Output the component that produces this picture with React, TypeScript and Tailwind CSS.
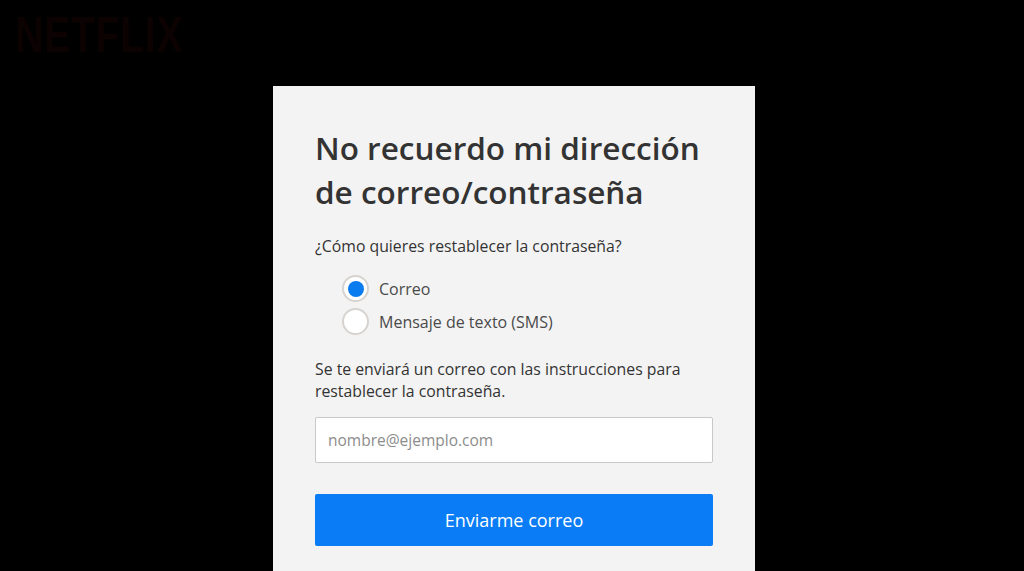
import React, { useState } from 'react';

const font = { fontFamily: '"Open Sans", "Noto Sans", sans-serif' };

const Radio: React.FC<{ checked: boolean; label: string; onClick: () => void }> = ({ checked, label, onClick }) => (
  <button type="button" onClick={onClick} className="flex items-center gap-[10px] h-[33px] text-left">
    <span className="w-[27px] h-[27px] rounded-full bg-white border-2 border-[#d6d3d0] flex items-center justify-center">
      {checked && <span className="w-[16px] h-[16px] rounded-full bg-[#0a7cf0]" />}
    </span>
    <span className="text-[16px] text-[#4a4a4a]">{label}</span>
  </button>
);

export default function App() {
  const [method, setMethod] = useState<'email' | 'sms'>('email');

  return (
    <div className="w-[1024px] h-[571px] bg-black overflow-hidden flex flex-col" style={font}>
      <div className="h-[86px] pl-[15px] pt-[10px]">
        <span
          className="inline-block origin-left scale-x-[0.78] text-[50px] font-bold tracking-[1px] text-[#0c0202] leading-none"
          style={{ fontFamily: '"Liberation Sans", sans-serif' }}
        >
          NETFLIX
        </span>
      </div>

      <div className="ml-[273px] w-[482px] flex-1 bg-[#f3f3f3] pl-[42px] pr-[41px] pt-[40px]">
        <h1 className="text-[31.5px] leading-[44px] font-[540] text-[#333333]">
          No recuerdo mi dirección de correo/contraseña
        </h1>

        <p className="mt-[21px] text-[15.8px] leading-[22px] text-[#333333]">¿Cómo quieres restablecer la contraseña?</p>

        <div className="mt-[15px] ml-[27px] flex flex-col">
          <Radio checked={method === 'email'} label="Correo" onClick={() => setMethod('email')} />
          <Radio checked={method === 'sms'} label="Mensaje de texto (SMS)" onClick={() => setMethod('sms')} />
        </div>

        <p className="mt-[20px] text-[15.8px] leading-[22px] text-[#333333]">
          Se te enviará un correo con las instrucciones para restablecer la contraseña.
        </p>

        <input
          type="email"
          placeholder="nombre@ejemplo.com"
          className="mt-[15px] w-[398px] h-[46px] bg-white border border-[#c8c8c8] rounded-[2px] px-[12px] text-[15.5px] text-[#333] placeholder:text-[#8c8c8c] outline-none"
        />

        <button
          type="button"
          className="mt-[31px] w-[398px] h-[52px] bg-[#0a7cf5] rounded-[2px] text-white text-[18px]"
        >
          Enviarme correo
        </button>
      </div>
    </div>
  );
}
